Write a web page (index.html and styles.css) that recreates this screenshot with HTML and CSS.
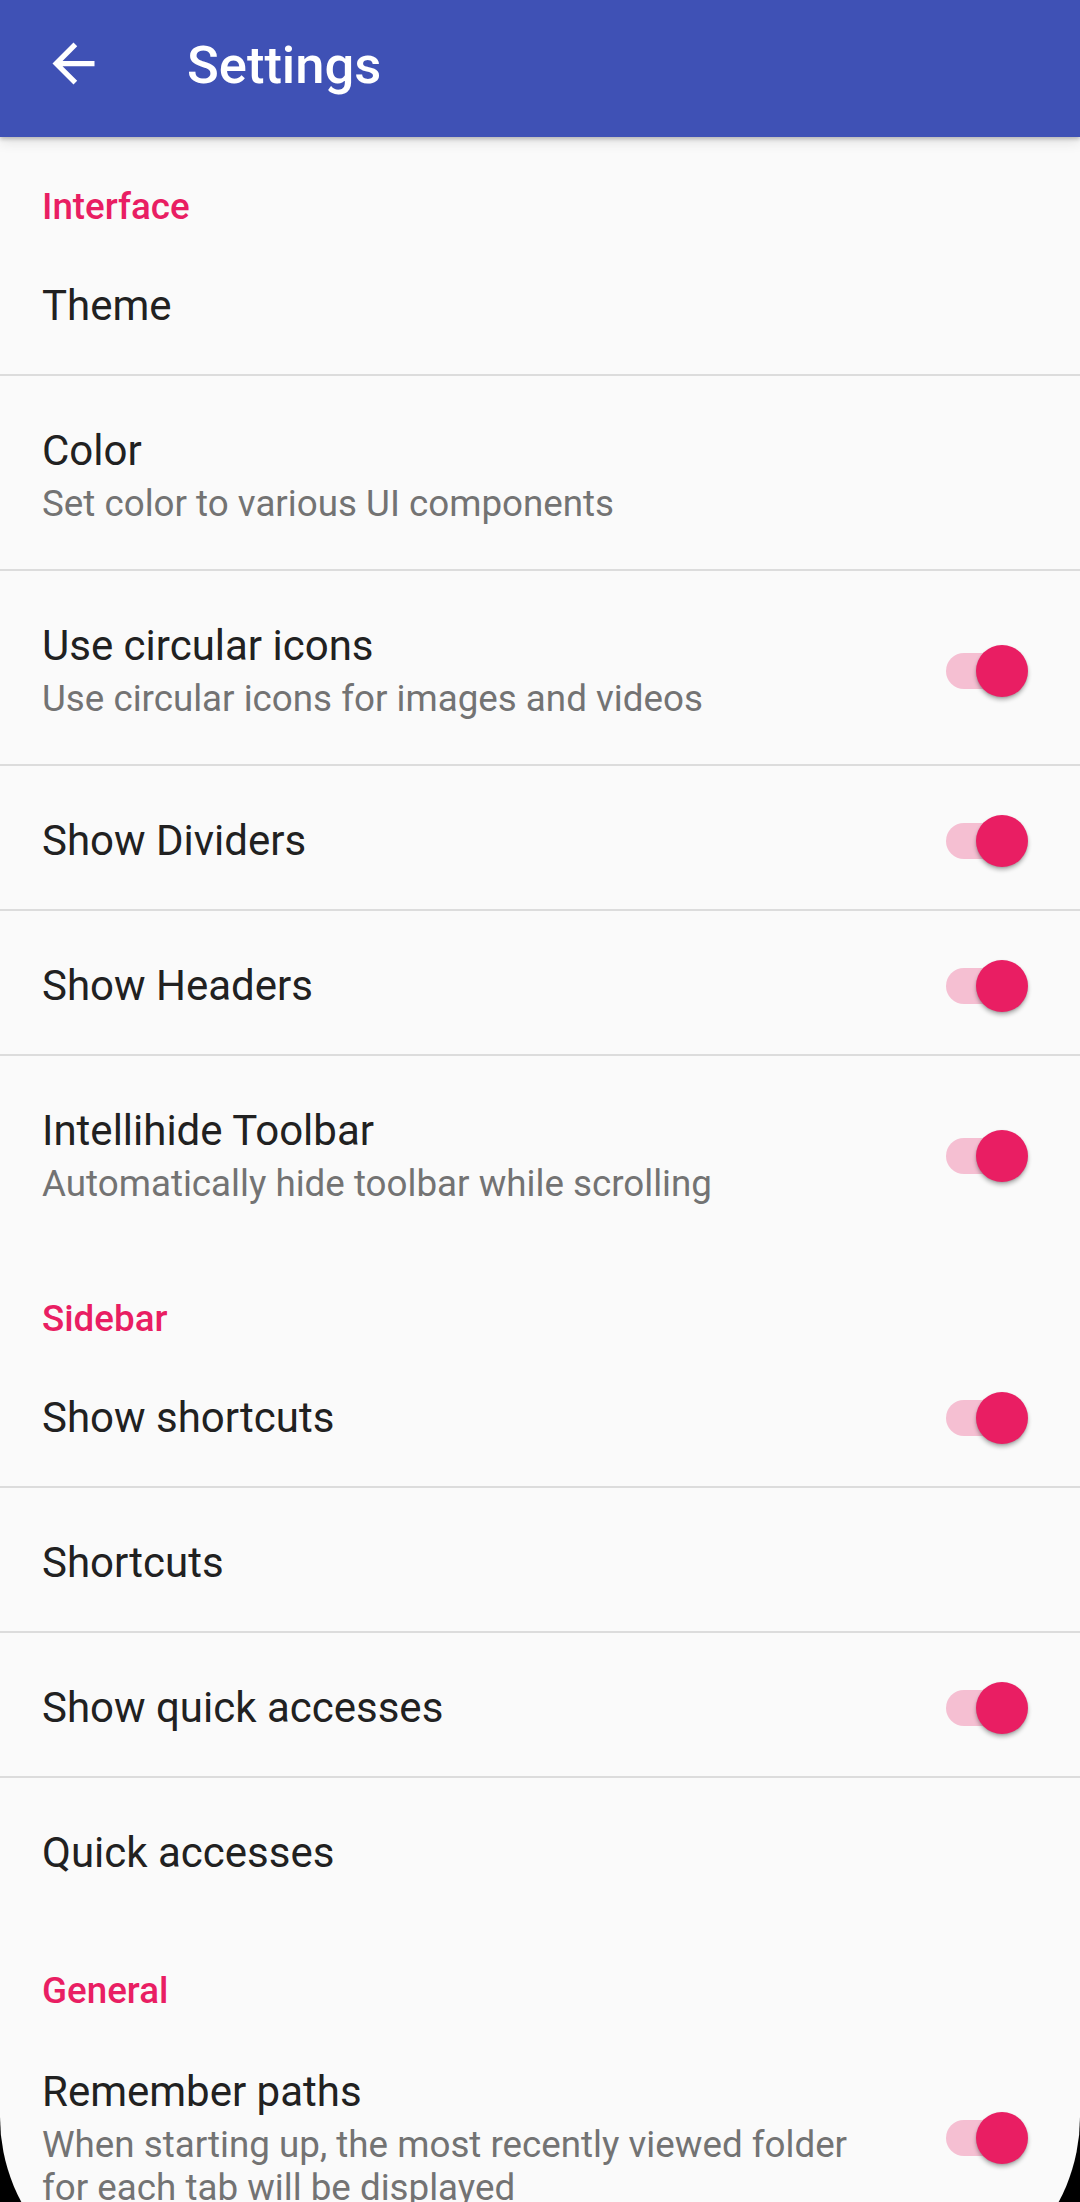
FILE: index.html
```html
<!DOCTYPE html>
<html lang="en">
<head>
<meta charset="utf-8">
<title>Settings</title>
<link rel="stylesheet" href="styles.css">
</head>
<body>
<div class="screen">
  <header class="appbar">
    <svg class="back" viewBox="0 0 24 24" width="63" height="63" aria-hidden="true">
      <path d="M20 11H7.83l5.59-5.59L12 4l-8 8 8 8 1.41-1.41L7.83 13H20v-2z" fill="#ffffff"/>
    </svg>
    <h1 class="appbar-title">Settings</h1>
  </header>

  <main class="prefs">
    <section class="category">
      <div class="category-title">Interface</div>
      <div class="row"><div class="text"><div class="title">Theme</div></div></div>
      <div class="divider"></div>
      <div class="row"><div class="text"><div class="title">Color</div><div class="summary">Set color to various UI components</div></div></div>
      <div class="divider"></div>
      <div class="row">
        <div class="text"><div class="title">Use circular icons</div><div class="summary">Use circular icons for images and videos</div></div>
        <div class="switch"><span class="track"></span><span class="thumb"></span></div>
      </div>
      <div class="divider"></div>
      <div class="row">
        <div class="text"><div class="title">Show Dividers</div></div>
        <div class="switch"><span class="track"></span><span class="thumb"></span></div>
      </div>
      <div class="divider"></div>
      <div class="row">
        <div class="text"><div class="title">Show Headers</div></div>
        <div class="switch"><span class="track"></span><span class="thumb"></span></div>
      </div>
      <div class="divider"></div>
      <div class="row">
        <div class="text"><div class="title">Intellihide Toolbar</div><div class="summary">Automatically hide toolbar while scrolling</div></div>
        <div class="switch"><span class="track"></span><span class="thumb"></span></div>
      </div>
    </section>

    <section class="category">
      <div class="category-title">Sidebar</div>
      <div class="row">
        <div class="text"><div class="title">Show shortcuts</div></div>
        <div class="switch"><span class="track"></span><span class="thumb"></span></div>
      </div>
      <div class="divider"></div>
      <div class="row"><div class="text"><div class="title">Shortcuts</div></div></div>
      <div class="divider"></div>
      <div class="row">
        <div class="text"><div class="title">Show quick accesses</div></div>
        <div class="switch"><span class="track"></span><span class="thumb"></span></div>
      </div>
      <div class="divider"></div>
      <div class="row"><div class="text"><div class="title">Quick accesses</div></div></div>
    </section>

    <section class="category">
      <div class="category-title">General</div>
      <div class="row row-tall">
        <div class="text"><div class="title">Remember paths</div><div class="summary">When starting up, the most recently viewed folder for each tab will be displayed</div></div>
        <div class="switch"><span class="track"></span><span class="thumb"></span></div>
      </div>
    </section>
  </main>

  <div class="corners" aria-hidden="true"></div>
</div>
</body>
</html>
```

FILE: styles.css
```css
html, body {
  margin: 0;
  padding: 0;
  height: 2202px;
  overflow: hidden;
  background: #000;
}

.screen {
  position: relative;
  width: 1080px;
  height: 2202px;
  overflow: hidden;
  background: #fafafa;
  font-family: Roboto, "Noto Sans", "Liberation Sans", sans-serif;
}

.appbar {
  position: relative;
  z-index: 2;
  height: 137px;
  box-sizing: border-box;
  padding: 0 0 11px 42px;
  display: flex;
  align-items: center;
  background: #3f51b5;
  box-shadow: 0 2px 4px rgba(0, 0, 0, 0.22), 0 5px 12px rgba(0, 0, 0, 0.10);
}

.back {
  display: block;
  flex: none;
}

.appbar-title {
  margin: 4px 0 0 82px;
  font-size: 52.5px;
  line-height: 62px;
  font-weight: 500;
  color: #ffffff;
}

.prefs {
  display: flex;
  flex-direction: column;
}

.category {
  display: flex;
  flex-direction: column;
}

.category-title {
  padding: 48px 42px 3px;
  font-size: 36.75px;
  line-height: 43px;
  font-weight: 500;
  color: #e91e63;
}

.row {
  display: flex;
  align-items: center;
  padding: 50px 52px 44px 42px;
}

.row-tall {
  padding-top: 52px;
  padding-bottom: 36px;
}

.text {
  flex: 1;
  min-width: 0;
}

.title {
  font-size: 42px;
  line-height: 49px;
  color: #212121;
}

.summary {
  margin-top: 7px;
  margin-right: 61px;
  font-size: 36.75px;
  line-height: 43px;
  color: #737373;
}

.divider {
  height: 2px;
  background: #dcdcdc;
}

.switch {
  position: relative;
  flex: none;
  width: 82px;
  height: 36px;
}

.track {
  position: absolute;
  left: 0;
  top: 0;
  width: 72px;
  height: 36px;
  border-radius: 18px;
  background: #f5bfd2;
}

.thumb {
  position: absolute;
  right: 0;
  top: -8px;
  width: 52px;
  height: 52px;
  border-radius: 50%;
  background: #e91e63;
  box-shadow: 0 3px 4px rgba(0, 0, 0, 0.28), 0 1px 2px rgba(0, 0, 0, 0.12);
}

.corners {
  position: absolute;
  left: 0;
  top: 0;
  width: 1080px;
  height: 2297px;
  border-radius: 0 0 180px 180px;
  box-shadow: 0 0 0 400px #000;
  pointer-events: none;
  z-index: 5;
}
```
